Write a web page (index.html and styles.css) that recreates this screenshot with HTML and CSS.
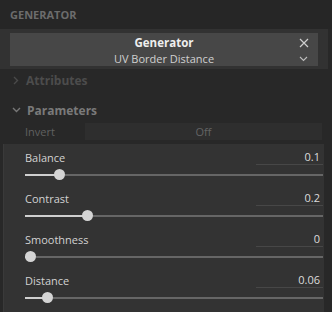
FILE: index.html
```html
<!DOCTYPE html>
<html lang="en">
<head>
  <meta charset="UTF-8" />
  <title>Generator</title>
  <link rel="stylesheet" href="styles.css">
</head>
<body>

  <div class="header">GENERATOR</div>

  <div class="gen-frame">
    <div class="gen-box">
      <div class="gen-title">Generator</div>
      <div class="gen-sub">UV Border Distance</div>
      <svg class="icon-close" width="10" height="10" viewBox="0 0 10 10">
        <path d="M1 1 L9 9 M9 1 L1 9" stroke="#cfcfcf" stroke-width="1.2" fill="none"/>
      </svg>
      <svg class="icon-down" width="9" height="6" viewBox="0 0 9 6">
        <path d="M1 1 L4.5 4.5 L8 1" stroke="#bdbdbd" stroke-width="1.1" fill="none"/>
      </svg>
    </div>
  </div>

  <div class="section dim">
    <svg width="8" height="9" viewBox="0 0 8 9"><path d="M2 1 L5.5 4.5 L2 8" stroke="#4a4a4a" stroke-width="1.4" fill="none"/></svg>
    <span>Attributes</span>
  </div>

  <div class="section open">
    <svg width="9" height="8" viewBox="0 0 9 8"><path d="M1 2 L4.5 5.5 L8 2" stroke="#777" stroke-width="1.4" fill="none"/></svg>
    <span>Parameters</span>
  </div>

  <div class="invert-row">
    <span class="invert-label">Invert</span>
    <div class="invert-field">Off</div>
  </div>

  <div class="panel">
    <div class="param">
      <div class="param-top">
        <span class="param-label">Balance</span>
        <span class="param-value">0.1</span>
      </div>
      <div class="track">
        <div class="fill" style="width: 34px"></div>
        <div class="thumb" style="left: 34px"></div>
      </div>
    </div>

    <div class="param">
      <div class="param-top">
        <span class="param-label">Contrast</span>
        <span class="param-value">0.2</span>
      </div>
      <div class="track">
        <div class="fill" style="width: 62px"></div>
        <div class="thumb" style="left: 62px"></div>
      </div>
    </div>

    <div class="param">
      <div class="param-top">
        <span class="param-label">Smoothness</span>
        <span class="param-value">0</span>
      </div>
      <div class="track">
        <div class="fill" style="width: 5px"></div>
        <div class="thumb" style="left: 5px"></div>
      </div>
    </div>

    <div class="param">
      <div class="param-top">
        <span class="param-label">Distance</span>
        <span class="param-value">0.06</span>
      </div>
      <div class="track">
        <div class="fill" style="width: 22px"></div>
        <div class="thumb" style="left: 22px"></div>
      </div>
    </div>
  </div>

</body>
</html>
```

FILE: styles.css
```css
body {
  margin: 0;
  background-color: #282828;
  font-family: "Open Sans", "Noto Sans", Arial, sans-serif;
  font-size: 11px;
  color: #c8c8c8;
  width: 332px;
  height: 312px;
  overflow: hidden;
}

.header {
  height: 29px;
  line-height: 30px;
  padding-left: 10px;
  font-weight: bold;
  color: #6c6c6c;
  background: #262626;
}

.gen-frame {
  background: #323232;
  padding: 4px 10px 3px 10px;
  margin-right: 4px;
}

.gen-box {
  position: relative;
  height: 33px;
  background: #474747;
  text-align: center;
}

.gen-title {
  padding-top: 2px;
  font-weight: bold;
  font-size: 11.5px;
  color: #eeeeee;
  line-height: 16px;
}

.gen-sub {
  color: #d0d0d0;
  line-height: 15px;
}

.icon-close {
  position: absolute;
  right: 9px;
  top: 5px;
}

.icon-down {
  position: absolute;
  right: 10px;
  top: 23px;
}

.section {
  display: flex;
  align-items: center;
  gap: 6px;
  height: 22px;
  padding-left: 12px;
  font-weight: bold;
  font-size: 12px;
}

.section.dim {
  color: #4c4c4c;
  margin-bottom: 8px;
}

.section.open {
  color: #7a7a7a;
}

.invert-row {
  display: flex;
  align-items: center;
  height: 21px;
  padding-left: 25px;
  padding-right: 10px;
  color: #606060;
}

.invert-label {
  width: 60px;
}

.invert-field {
  flex: 1;
  height: 17px;
  line-height: 17px;
  background: #2e2e2e;
  text-align: center;
  color: #646464;
}

.panel {
  box-sizing: border-box;
  margin: 2px 8px 0 3px;
  border-left: 1px solid #3a3a3a;
  background: #333333;
  padding: 5px 1px 0 21px;
  height: 170px;
}

.param {
  height: 41px;
}

.param-top {
  display: flex;
  justify-content: space-between;
  align-items: flex-end;
  height: 16px;
}

.param-label {
  color: #d2d2d2;
  font-size: 11px;
}

.param-value {
  width: 64px;
  text-align: right;
  color: #dcdcdc;
  padding-right: 3px;
  border-bottom: 1px solid #474747;
  line-height: 15px;
}

.track {
  position: relative;
  margin-top: 9px;
  height: 2px;
  background: #666666;
}

.fill {
  height: 2px;
  background: #cfcfcf;
}

.thumb {
  position: absolute;
  top: -5px;
  width: 11px;
  height: 11px;
  margin-left: -5px;
  border-radius: 50%;
  background: #d4d4d4;
}
```
